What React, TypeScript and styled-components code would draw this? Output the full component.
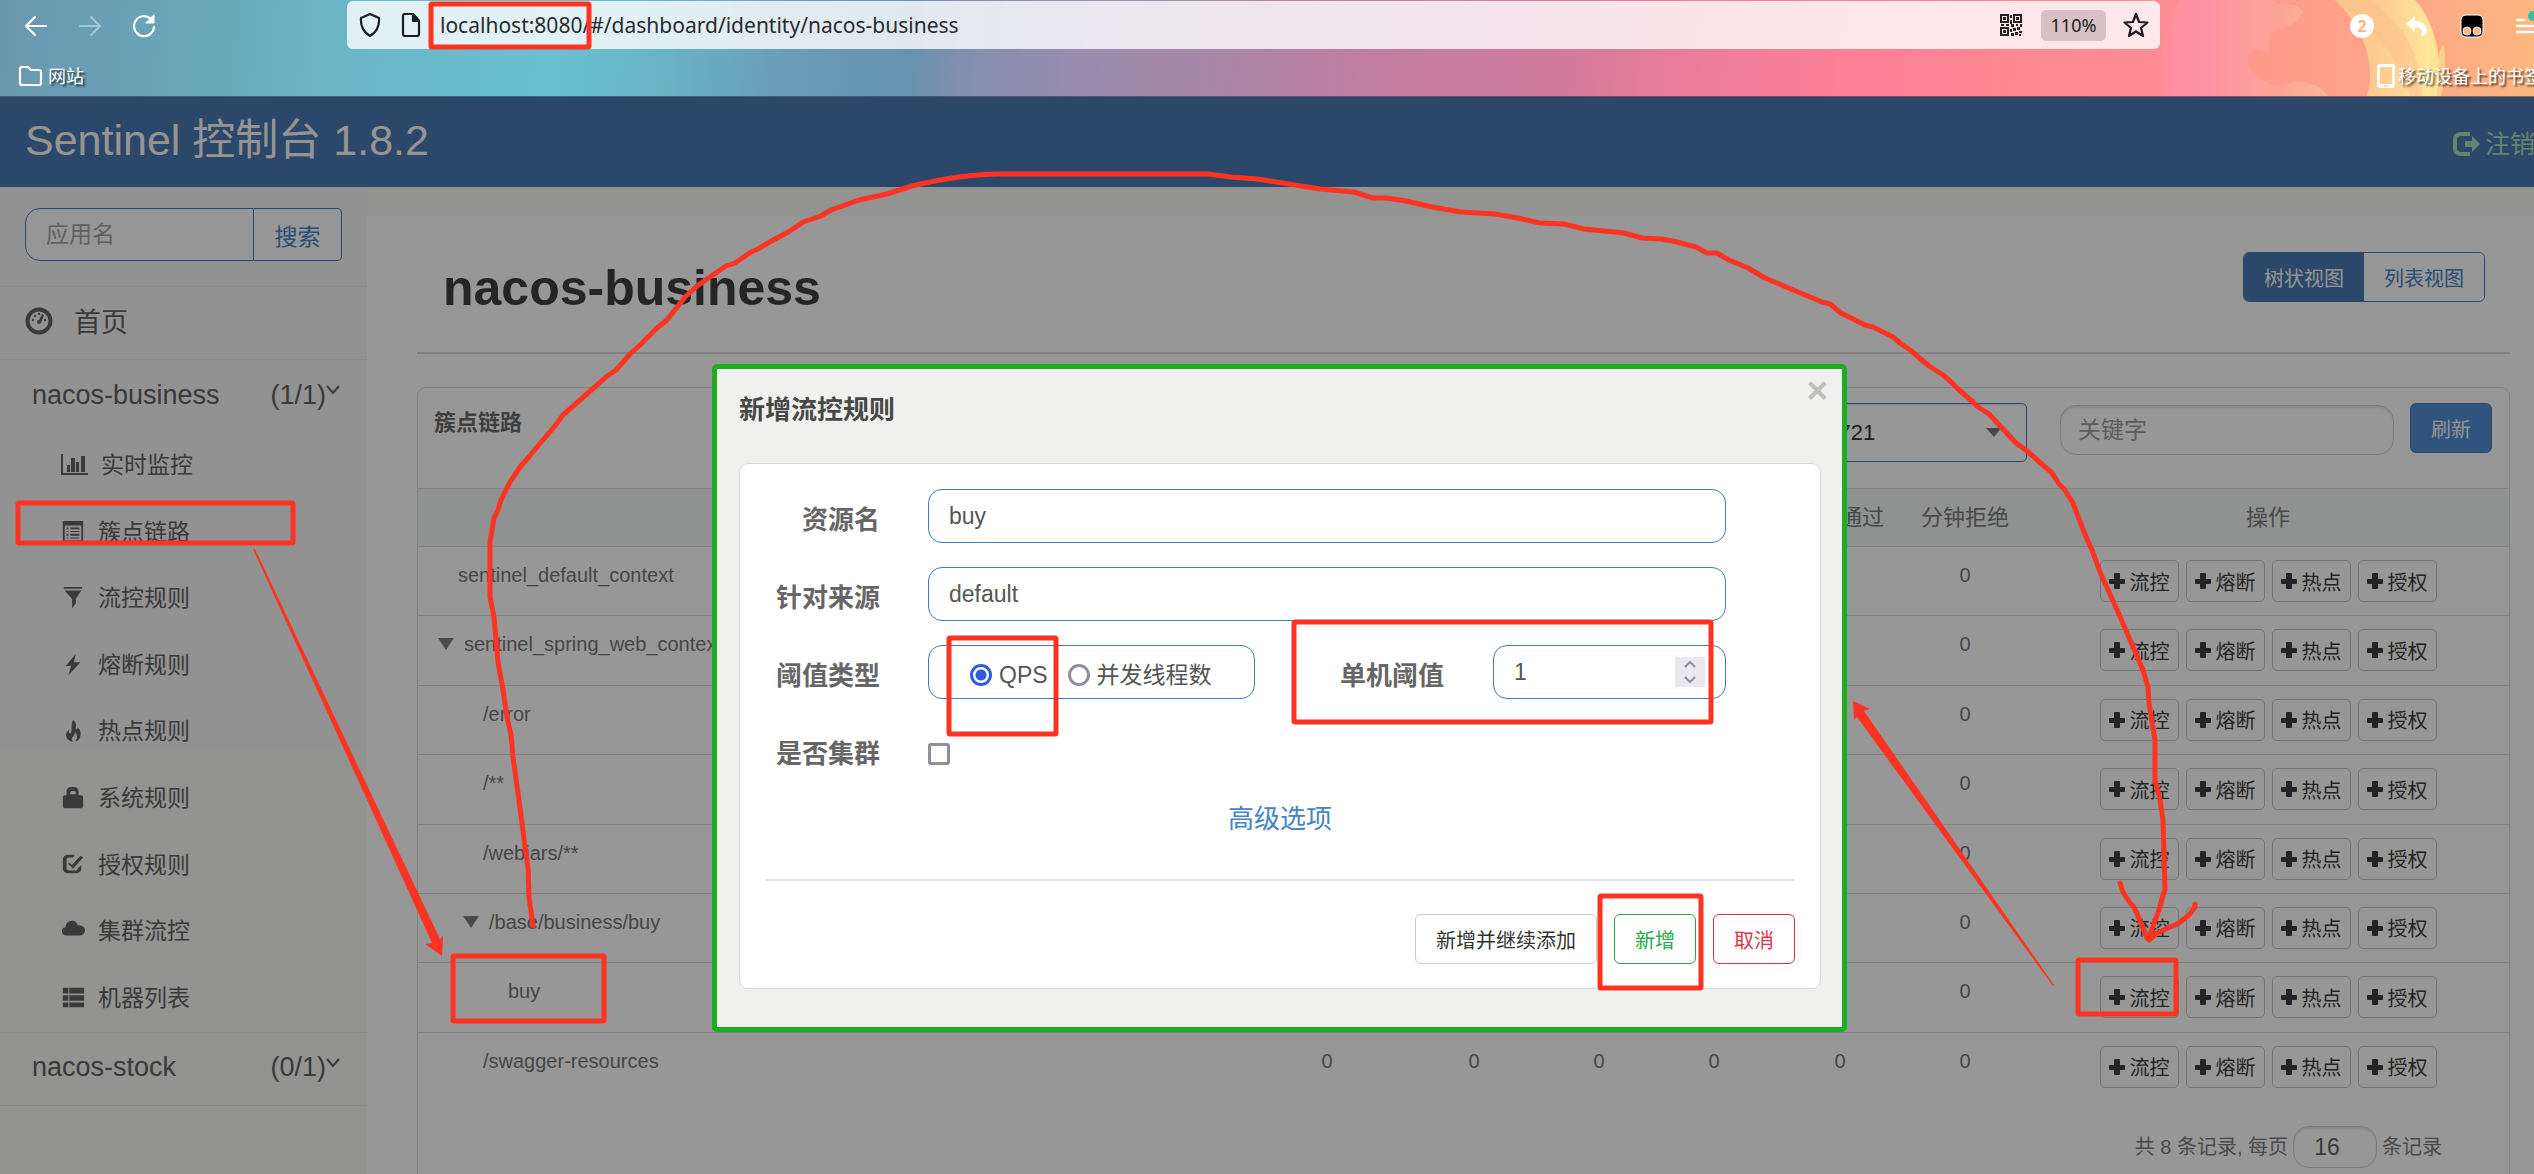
import React, { useState } from "react";
import styled, { createGlobalStyle, css } from "styled-components";

const UI_FONT = `"Liberation Sans", "Noto Sans CJK SC", Arial, sans-serif`;
const CHROME_FONT = `"Noto Sans", "Open Sans", "Noto Sans CJK SC", sans-serif`;
const BLUE = "#4878b2";
const LINE = "#d9d9d9";
const INK = "#616161";
const RED = "#ff3322";

const GlobalStyle = createGlobalStyle`
  *, *::before, *::after { box-sizing: border-box; }
  body { margin: 0; font-family: ${UI_FONT}; font-size: 20px; line-height: 30px; color: ${INK}; }
  button, input, select { font-family: inherit; margin: 0; }
  button { cursor: pointer; }
  svg { display: block; flex: none; }
`;

const Screen = styled.div`
  position: relative;
  height: 100vh;
  overflow: hidden;
  display: flex;
  flex-direction: column;
`;

/* ---------- browser chrome ---------- */

const Chrome = styled.header`
  position: relative;
  flex: none;
  display: flex;
  flex-direction: column;
  font-family: ${CHROME_FONT};
  color: #fff;
  border-bottom: 1px solid rgba(30, 20, 50, 0.5);
  background: linear-gradient(
    94deg,
    #6a97af 0%, #6aa5b9 7%, #6bb6c8 14%, #69c1d2 22%, #69b4c6 26%, #6a9eb8 31%,
    #6692b0 36%, #828fae 38%, #968db0 42%, #ad85a6 49%, #c47ca1 55%, #cf7b9c 61%,
    #ec7d99 67%, #ff8099 73%, #fd888f 80%, #ff8b92 85%, #fda389 92%, #fcb87f 100%
  );
`;

const ThemeArt = styled.svg`
  position: absolute;
  top: 0;
  right: 0;
  width: 404px;
  height: 96px;
`;

const Toolbar = styled.div`
  position: relative;
  display: flex;
  align-items: flex-start;
  padding-top: 1px;
`;

const NavButtons = styled.div`
  width: 347px;
  height: 50px;
  padding-left: 24px;
  display: flex;
  align-items: center;
  gap: 30px;
`;

const IconButton = styled.button<{ $dim?: boolean }>`
  border: 0;
  padding: 0;
  background: none;
  color: inherit;
  opacity: ${(p) => (p.$dim ? 0.4 : 1)};
`;

const AddressBar = styled.div`
  flex: 1;
  min-width: 0;
  height: 48px;
  padding: 0 11px 0 12px;
  display: flex;
  align-items: center;
  border-radius: 6px;
  background: rgba(255, 255, 255, 0.8);
  color: #1c1b22;
`;

const AddressInput = styled.input`
  flex: 1;
  min-width: 0;
  margin-left: 18px;
  padding: 0;
  border: 0;
  outline: 0;
  background: none;
  font-size: 21px;
  line-height: 32px;
  color: #2a2a31;
`;

const AddressIcons = styled.div`
  display: flex;
  gap: 19px;
`;

const ZoomLevel = styled.button`
  height: 31px;
  width: 65px;
  margin: 0 17px 0 19px;
  padding: 0;
  border: 0;
  border-radius: 5px;
  background: rgba(160, 140, 145, 0.42);
  font-size: 18px;
  color: #1c1b22;
`;

const Extensions = styled.div`
  width: 374px;
  height: 50px;
  padding-left: 190px;
  display: flex;
  align-items: center;
  gap: 32px;
`;

const ExtensionButton = styled(IconButton)`
  flex: none;
`;

const CountBadge = styled.span`
  flex: none;
  width: 24px;
  height: 24px;
  border-radius: 50%;
  background: #fff;
  color: #fcb583;
  font: 700 16px/24px ${CHROME_FONT};
  text-align: center;
`;

const Bookmarks = styled.nav`
  position: relative;
  height: 45px;
  margin-right: -8px;
  padding: 5px 0 0 18px;
  display: flex;
  align-items: flex-start;
  justify-content: space-between;
  font-size: 18px;
`;

const Bookmark = styled.a<{ $gap: number }>`
  height: 40px;
  display: flex;
  align-items: center;
  gap: ${(p) => p.$gap}px;
  color: #fff;
  text-decoration: none;
  text-shadow: 2px 2px 2px rgba(0, 0, 0, 0.7);
  white-space: nowrap;
`;

/* ---------- console page ---------- */

const Page = styled.div`
  position: relative;
  flex: 1;
  min-height: 0;
  width: calc(100% + 25px);
  display: flex;
  flex-direction: column;
  background: #fcfcfc;
`;

const TopBar = styled.div`
  flex: none;
  height: 90px;
  padding: 0 24px 0 25px;
  display: flex;
  justify-content: space-between;
  background: ${BLUE};
`;

const Brand = styled.a`
  font-size: 43px;
  line-height: 86px;
  color: #f9f7f3;
  text-decoration: none;
`;

const Logout = styled.a`
  display: flex;
  align-items: center;
  gap: 5px;
  padding-top: 4px;
  font-size: 25px;
  color: #a7dcb2;
  text-decoration: none;
`;

const Body = styled.div`
  flex: 1;
  min-height: 0;
  display: flex;
`;

const Sidebar = styled.aside`
  width: 367px;
  flex: none;
  background: linear-gradient(#f3f3f3 562px, #f6f6f2 562px);
`;

const SearchBox = styled.form`
  display: flex;
  height: 100px;
  padding: 21px 25px 25px;
  border-bottom: 1px solid #e6e6e6;
`;

const SearchInput = styled.input`
  width: 229px;
  height: 53px;
  padding: 0 20px;
  border: 1px solid ${BLUE};
  border-radius: 15px 0 0 15px;
  background: #fafafa;
  font-size: 23px;
  &::placeholder { color: #a2a2a2; }
`;

const SearchButton = styled.button`
  flex: 1;
  height: 53px;
  padding: 0;
  border: 1px solid ${BLUE};
  border-left: 0;
  border-radius: 0 5px 5px 0;
  background: #fafafa;
  font-size: 23px;
  color: #4680c0;
`;

const HomeLink = styled.a`
  height: 73px;
  padding-left: 25px;
  display: flex;
  align-items: center;
  gap: 21px;
  border-bottom: 1px solid #e6e6e6;
  font-size: 27px;
  color: ${INK};
  text-decoration: none;
`;

const AppGroup = styled.button<{ $closed?: boolean }>`
  width: 100%;
  height: 73px;
  padding: 0 27px 3px 32px;
  display: flex;
  align-items: center;
  border: 0;
  border-bottom: ${(p) => (p.$closed ? "1px solid #e6e6e6" : "0")};
  background: none;
  font-size: 27px;
  color: ${INK};
`;

const AppName = styled.span`
  flex: 1;
  text-align: left;
`;

const MenuList = styled.ul`
  height: 600px;
  margin: 0;
  padding: 0;
  list-style: none;
  display: grid;
  grid-auto-rows: 1fr;
  border-bottom: 1px solid #e6e6e6;
`;

const MenuLink = styled.a`
  height: 100%;
  padding: 0 0 2px 61px;
  display: flex;
  align-items: center;
  gap: 13px;
  font-size: 23px;
  color: ${INK};
  text-decoration: none;
`;

const Main = styled.main`
  flex: 1;
  min-width: 0;
  padding: 0 49px 0 50px;
  border-top: 29px solid #f6f6f2;
`;

const TitleRow = styled.div`
  height: 138px;
  padding: 36px 25px 0 26px;
  display: flex;
  justify-content: space-between;
  align-items: flex-start;
  border-bottom: 2px solid #d9d9d9;
`;

const Title = styled.h1`
  margin: 6px 0 0;
  font-size: 50px;
  line-height: 60px;
  color: #3e3e3e;
`;

const ViewSwitch = styled.div`
  display: flex;
  border: 1px solid ${BLUE};
  border-radius: 6px;
  overflow: hidden;
`;

const ViewButton = styled.button<{ $active?: boolean }>`
  width: 120px;
  height: 48px;
  padding: 0;
  border: 0;
  background: ${(p) => (p.$active ? BLUE : "#fcfcfc")};
  color: ${(p) => (p.$active ? "#f6f6f6" : "#4680c0")};
  font-size: 20px;
`;

const Card = styled.section`
  height: 860px;
  margin-top: 33px;
  border: 1px solid ${LINE};
  border-radius: 9px;
`;

const CardHeader = styled.div`
  height: 100px;
  padding: 15px 17px 0 16px;
  display: flex;
  align-items: flex-start;
`;

const CardTitle = styled.h2`
  flex: 1;
  margin: 5px 0 0;
  font-size: 22px;
  line-height: 30px;
  color: #6a6a6a;
`;

const SelectWrap = styled.div`
  position: relative;
  width: 340px;
  margin-right: 33px;
  & > svg { position: absolute; right: 26px; top: 25px; }
`;

const MachineSelect = styled.select`
  appearance: none;
  width: 100%;
  height: 59px;
  padding: 0 16px;
  border: 1px solid ${BLUE};
  border-radius: 5px;
  background: #fcfcfc;
  box-shadow: inset 0 2px 2px rgba(0, 0, 0, 0.08);
  font-size: 22px;
  color: #333;
`;

const fieldFrame = css`
  border: 1px solid #cfcfcf;
  border-radius: 16px;
  background: #fcfcfc;
  box-shadow: inset 0 2px 2px rgba(0, 0, 0, 0.09);
  font-size: 23px;
`;

const KeywordInput = styled.input`
  ${fieldFrame}
  width: 334px;
  height: 50px;
  margin: 2px 16px 0 0;
  padding: 0 17px;
  &::placeholder { color: #9a9a9a; }
`;

const RefreshButton = styled.button`
  width: 82px;
  height: 50px;
  padding: 0;
  border: 1px solid #4878b2;
  border-radius: 6px;
  background: #508cd0;
  font-size: 20px;
  color: #f6f6f6;
`;

const ResourceTable = styled.table`
  width: 100%;
  height: 613px;
  border-collapse: separate;
  border-spacing: 0;
  table-layout: fixed;
`;

const HeadCell = styled.th`
  height: 58px;
  padding: 0;
  border-top: 1px solid ${LINE};
  background: #eff3f1;
  font-size: 22px;
  font-weight: 400;
  color: #7a7a7a;
`;

const Cell = styled.td<{ $center?: boolean }>`
  padding: 13px 0 0;
  border-top: 1px solid ${LINE};
  vertical-align: top;
  text-align: ${(p) => (p.$center ? "center" : "left")};
  font-size: 20px;
  line-height: 30px;
  color: #767676;
`;

const ResourceName = styled.div<{ $depth: number; $leaf: boolean }>`
  padding-left: ${(p) => 20 + 25 * p.$depth + (p.$leaf ? 20 : 0)}px;
  display: flex;
  align-items: center;
  gap: 10px;
`;

const Actions = styled.div`
  display: flex;
  justify-content: center;
  gap: 7px;
  padding-bottom: 13px;
`;

const ActionButton = styled.button`
  height: 42px;
  padding: 0 8px;
  display: flex;
  align-items: center;
  gap: 5px;
  border: 1px solid #c4c4c4;
  border-radius: 5px;
  background: none;
  font-size: 20px;
  color: #3c3c3c;
  white-space: nowrap;
`;

const Pager = styled.div`
  margin-top: 25px;
  padding-right: 67px;
  display: flex;
  align-items: center;
  justify-content: flex-end;
  gap: 5px;
  color: #7c7c7c;
`;

const PageSize = styled.input`
  ${fieldFrame}
  width: 84px;
  height: 42px;
  padding: 0 16px 0 0;
  text-align: center;
  color: #616161;
`;

/* ---------- modal ---------- */

const Backdrop = styled.div`
  position: absolute;
  inset: 0;
  padding-top: 267px;
  display: flex;
  justify-content: center;
  align-items: flex-start;
  background: rgba(0, 0, 0, 0.4);
`;

const Modal = styled.div`
  width: 1135px;
  padding-bottom: 38px;
  border: 5px solid #1cad22;
  border-radius: 5px;
  background: #f0f0ee;
`;

const ModalHeader = styled.div`
  height: 94px;
  padding: 6px 14px 0 22px;
  display: flex;
  justify-content: space-between;
  align-items: flex-start;
`;

const ModalTitle = styled.h3`
  margin: 19px 0 0;
  font-size: 26px;
  line-height: 32px;
  color: #484848;
`;

const CloseButton = styled.button`
  padding: 0;
  border: 0;
  background: none;
  font-size: 37px;
  font-weight: 700;
  line-height: 32px;
  color: #c0c0bf;
`;

const Panel = styled.form`
  margin: 0 21px 0 22px;
  padding: 25px 25px 24px;
  border: 1px solid #dadada;
  border-radius: 9px;
  background: #fff;
`;

const Fields = styled.div`
  padding-right: 69px;
  display: grid;
  grid-template-columns: 115px 1fr;
  column-gap: 48px;
  row-gap: 24px;
`;

const FieldLabel = styled.label`
  padding-top: 8px;
  font-size: 26px;
  line-height: 46px;
  font-weight: 700;
  color: #666;
  text-align: right;
  white-space: nowrap;
`;

const blueFrame = css`
  height: 54px;
  border: 1px solid #3f7ab8;
  border-radius: 14px;
  background: #fff;
  font-size: 23px;
  color: #555;
`;

const TextInput = styled.input`
  ${blueFrame}
  width: 100%;
  padding: 0 20px;
`;

const Split = styled.div`
  display: flex;
`;

const RadioGroup = styled.div`
  ${blueFrame}
  width: 327px;
  padding: 5px 0 0 41px;
  display: flex;
  align-items: center;
  gap: 20px;
`;

const RadioLabel = styled.label`
  display: flex;
  align-items: center;
  gap: 7px;
`;

const Radio = styled.input`
  appearance: none;
  width: 22px;
  height: 22px;
  border: 3px solid #8f8f9d;
  border-radius: 50%;
  background: #fff;
  &:checked {
    border-color: #2b5cde;
    background: radial-gradient(circle, #2b5cde 5px, #fff 6px);
  }
`;

const ThresholdLabel = styled(FieldLabel)`
  flex: 1;
  padding-right: 49px;
`;

const NumberBox = styled.div`
  ${blueFrame}
  width: 233px;
  padding: 0 20px;
  display: flex;
  align-items: center;
`;

const NumberInput = styled.input`
  flex: 1;
  min-width: 0;
  padding: 0;
  border: 0;
  outline: 0;
  appearance: textfield;
  font-size: 23px;
  color: #555;
  &::-webkit-inner-spin-button { appearance: none; margin: 0; }
`;

const Spinner = styled.div`
  width: 30px;
  height: 30px;
  display: flex;
  flex-direction: column;
  align-items: center;
  background: #e8e8ed;
`;

const SpinButton = styled.button`
  width: 30px;
  height: 15px;
  padding: 0;
  border: 0;
  background: none;
  display: flex;
  align-items: center;
  justify-content: center;
`;

const CheckRow = styled.div`
  height: 54px;
  padding-top: 8px;
  display: flex;
  align-items: center;
`;

const Checkbox = styled.input`
  appearance: none;
  width: 22px;
  height: 22px;
  border: 3px solid #8f8f9d;
  border-radius: 3px;
  background: #fff;
`;

const AdvancedLink = styled.a`
  width: fit-content;
  margin: 24px auto 42px;
  display: block;
  font-size: 26px;
  line-height: 36px;
  color: #4483c8;
  text-decoration: none;
`;

const ModalFooter = styled.div`
  padding-top: 33px;
  border-top: 2px solid #e3e3e3;
  display: flex;
  justify-content: flex-end;
  gap: 17px;
`;

const OutlineButton = styled.button<{ $line: string; $ink: string }>`
  height: 50px;
  padding: 0 20px;
  border: 1px solid ${(p) => p.$line};
  border-radius: 6px;
  background: #fff;
  font-size: 20px;
  color: ${(p) => p.$ink};
`;

/* ---------- annotations ---------- */

const Markup = styled.svg`
  position: absolute;
  left: 0;
  top: 0;
  pointer-events: none;
`;

/* ---------- icons ---------- */

type IconName =
  | "stats" | "list" | "filter" | "flash" | "fire" | "lock" | "check" | "cloud" | "rows";

const Glyph = ({ name }: { name: IconName }) => {
  if (name === "stats") {
    return (
      <svg width="27" height="22" viewBox="0 0 27 22" fill="currentColor" aria-hidden="true">
        <path d="M0 0h2v19h25v2H0z" />
        <path d="M6 11h3v7H6zM10 4h4v14h-4zM15 8h3v10h-3zM20 2h4v16h-4z" />
      </svg>
    );
  }
  const shapes: Record<Exclude<IconName, "stats">, React.ReactNode> = {
    list: (
      <>
        <path fillRule="evenodd" d="M2 0h22v23H2zM4 5v16h18V5z" />
        <path d="M6 7h2v2H6zM10 7h10v2H10zM6 11h2v1H6zM10 11h10v1H10zM6 14h2v2H6zM10 14h10v2H10zM6 18h2v1H6zM10 18h10v1H10z" />
      </>
    ),
    filter: <path d="M3 0h20v2H3zM4 4h18l-6 9v5l-4 5V13z" />,
    flash: <path d="M16 0 5 13h6L8 23l13-14h-7z" />,
    fire: (
      <path d="M13 0c5 4 3 7 3 9 0 2 2 2 2-1 4 3 4 9 2 12-1 2-3 3-5 3 3-3 3-6 0-10 0 5-4 5-3 9l1 2c-5-1-9-5-7-10 1-2 2-3 3-4-1 3 0 5 1 5 3-4 0-8 3-15z" />
    ),
    lock: (
      <path fillRule="evenodd" d="M6 9V5c0-3 2-5 5-5h3c3 0 5 2 5 5v4h3c1 0 2 1 2 2v10c0 1-1 2-2 2H4c-1 0-2-1-2-2V11c0-1 1-2 2-2zM10 8h6V6c0-2-6-2-6 0z" />
    ),
    check: (
      <>
        <path d="M15 1H9C4 1 2 3 2 7v8c0 4 2 6 7 6h6c5 0 7-2 7-6v-3l-4 4c0 1-1 2-3 2H9c-2 0-3-1-3-3V7c0-2 1-3 3-3h4z" />
        <path d="m8 9 4 3 9-10 3 2-11 12-5-5z" />
      </>
    ),
    cloud: (
      <path d="M20 17H6c-3 0-5-2-5-5s2-4 4-4c0-4 3-7 7-7 3 0 6 2 6 5 4-1 8 2 8 5 0 4-3 6-6 6z" />
    ),
    rows: (
      <path d="M2 1h6v6H2zM9 1h16v6H9zM2 9h6v6H2zM9 9h16v6H9zM2 17h6v5H2zM9 17h16v5H9z" />
    ),
  };
  return (
    <svg width="24" height="24" viewBox="0 0 26 24" fill="currentColor" aria-hidden="true">
      {shapes[name]}
    </svg>
  );
};

const Plus = () => (
  <svg width="16" height="16" viewBox="0 0 16 16" fill="currentColor" aria-hidden="true">
    <path d="M6 0h4q1 0 1 1v5h4q1 0 1 1v3q0 1-1 1h-4v4q0 1-1 1H6q-1 0-1-1v-4H1q-1 0-1-1V7q0-1 1-1h4V1q0-1 1-1z" />
  </svg>
);

const Triangle = () => (
  <svg width="16" height="12" viewBox="0 0 16 12" fill="#7c7c7c" aria-hidden="true">
    <path d="M0 0h16L8 12z" />
  </svg>
);

const GroupChevron = () => (
  <svg width="14" height="26" viewBox="0 0 14 26" fill="none" stroke="currentColor" strokeWidth="2" aria-hidden="true">
    <path d="m1 4 6 7 6-7" />
  </svg>
);

const Dashboard = () => (
  <svg width="28" height="32" viewBox="0 0 28 32" aria-hidden="true">
    <circle cx="14" cy="14" r="11.500" fill="none" stroke="currentColor" strokeWidth="4" />
    <g fill="currentColor">
      <circle cx="8" cy="13" r="1.200" />
      <circle cx="10" cy="9" r="1.200" />
      <circle cx="14" cy="7" r="1.200" />
      <circle cx="20" cy="13" r="1.200" />
      <circle cx="14" cy="15" r="2" />
      <path d="m17 7 2 1-3 8-3-1z" />
    </g>
  </svg>
);

const chromeStroke = { fill: "none", stroke: "currentColor", strokeWidth: 2.2, strokeLinecap: "round", strokeLinejoin: "round" } as const;

const QrCode = () => (
  <svg width="22" height="22" viewBox="0 0 22 22" fill="#222" aria-hidden="true">
    <path fillRule="evenodd" d="M0 0h9v9H0zM2 2v5h5V2zM13 0h9v9h-9zM15 2v5h5V2zM0 13h9v9H0zM2 15v5h5v-5z" />
    <path d="M3 3h3v3H3zM16 3h3v3h-3zM3 16h3v3H3zM10 1h2v3h-2zM10 6h2v4h-2zM1 10h3v2H1zM6 10h3v2H6zM11 10h3v3h-3zM16 10h2v2h-2zM20 10h2v3h-2zM13 14h3v3h-3zM17 13h3v3h-3zM10 15h2v3h-2zM11 19h3v3h-3zM15 18h3v3h-3zM19 17h3v2h-3zM19 20h2v2h-2z" />
  </svg>
);

/* ---------- data ---------- */

const MENU: { icon: IconName; label: string }[] = [
  { icon: "stats", label: "实时监控" },
  { icon: "list", label: "簇点链路" },
  { icon: "filter", label: "流控规则" },
  { icon: "flash", label: "熔断规则" },
  { icon: "fire", label: "热点规则" },
  { icon: "lock", label: "系统规则" },
  { icon: "check", label: "授权规则" },
  { icon: "cloud", label: "集群流控" },
  { icon: "rows", label: "机器列表" },
];

const COLUMNS = ["", "通过QPS", "拒绝QPS", "并发数", "平均RT", "分钟通过", "分钟拒绝", "操作"];
const COLUMN_WIDTHS = [undefined, 148, 146, 104, 126, 126, 124, 482];
const ACTIONS = ["流控", "熔断", "热点", "授权"];

const RESOURCES = [
  { name: "sentinel_default_context", depth: 0, leaf: true },
  { name: "sentinel_spring_web_context", depth: 0, leaf: false },
  { name: "/error", depth: 1, leaf: true },
  { name: "/**", depth: 1, leaf: true },
  { name: "/webjars/**", depth: 1, leaf: true },
  { name: "/base/business/buy", depth: 1, leaf: false },
  { name: "buy", depth: 2, leaf: true },
  { name: "/swagger-resources", depth: 1, leaf: true },
];

/* x, y, width, height along the centre of each stroke */
const MARKED_BOXES = [
  [431, 4, 158, 43],
  [18, 503, 275, 40],
  [453, 956, 151, 65],
  [949, 638, 107, 96],
  [1294, 622, 417, 100],
  [1600, 896, 101, 92],
  [2078, 960, 98, 54],
];

const SWEEP =
  "M533 926 529 897 528 867 525 847 522 823 518 793 513 757 511 735 507 717 503 690 498 662 494 617 490 597 490 542 494 518 498 510 501 500 507 488 510 482 520 467 528 458 537 447 554 427 563 415 588 393 606 377 616 370 631 353 640 345 657 328 667 320 685 297 697 286 726 266 735 263 751 252 758 249 768 243 790 231 803 222 821 216 831 210 859 200 887 194 912 186 Q965 173 1007 174L1208 174 1231 177 1257 179 1320 189 1354 192 1373 198 1386 198 1406 201 1432 207 1461 212 1495 214 1518 218 1540 223 1564 224 1584 229 1624 233 1642 238 1661 239 1673 241 1696 247 1707 253 1717 253 1729 260 1748 268 1765 278 1803 294 1822 302 1830 304 1841 313 1865 325 1873 327 1893 337 1900 343 1910 350 1929 366 1943 375 1950 381 1957 388 1973 402 1978 407 1989 414 2001 427 2016 443 2027 451 2052 473 2059 484 2064 489 2073 503 2084 532 2092 550 2100 572 2118 612 2134 649 2143 670 2148 687 2149 703 2155 740 2155 780 2160 800 2163 820 2165 890 2163 895 2159 910 2149 937";
const SWEEP_HEAD =
  "M2120 883 2123 892 2130 903 2134 907 2141 923 2147 938 2149 940 2157 933 2179 923 2189 915 2195 907 2195 904";

const BrowserChrome = () => (
  <Chrome>
    <ThemeArt viewBox="0 0 404 96" aria-hidden="true">
      <defs>
        <linearGradient id="fur" x1="0" x2="1">
          <stop offset="0" stopColor="#ff8d98" />
          <stop offset="0.25" stopColor="#fd93a8" />
          <stop offset="0.7" stopColor="#fda394" />
          <stop offset="1" stopColor="#fdb69a" />
        </linearGradient>
        <linearGradient id="tail" x1="0" x2="1">
          <stop offset="0" stopColor="#fdc792" />
          <stop offset="0.45" stopColor="#fdcc90" />
          <stop offset="0.9" stopColor="#fde79b" />
          <stop offset="1" stopColor="#fde08f" />
        </linearGradient>
        <linearGradient id="sky" x1="0" x2="1">
          <stop offset="0" stopColor="#fd9a8b" />
          <stop offset="0.5" stopColor="#fda48a" />
          <stop offset="1" stopColor="#fcb87f" />
        </linearGradient>
      </defs>
      <path d="M120 0H404V96H120z" fill="url(#sky)" />
      <path d="M50 0C34 26 28 62 32 96H198C190 85 176 80 163 82C150 90 135 84 125 74C117 66 115 56 121 51C127 48 134 50 138 54C140 46 140 40 139 34C150 28 168 25 172 13C173 5 160 4 148 3L140 0z" fill="url(#fur)" />
      <path d="M205 0C232 26 247 62 237 96H308C314 62 305 22 285 0z" fill="url(#tail)" />
      <path d="M205 0C232 22 262 40 280 96H292C292 50 268 20 240 0z" fill="#fdbd8c" opacity="0.5" />
      <path d="M309 56Q311 44 314 45Q317 72 311 96H307z" fill="#fdd08c" />
    </ThemeArt>
    <Toolbar>
      <NavButtons>
        <IconButton aria-label="后退">
          <svg width="24" height="24" viewBox="0 0 24 24" {...chromeStroke}><path d="M22 12H2M11 3 2 12l9 9" /></svg>
        </IconButton>
        <IconButton aria-label="前进" $dim>
          <svg width="24" height="24" viewBox="0 0 24 24" {...chromeStroke}><path d="M2 12h20M13 3l9 9-9 9" /></svg>
        </IconButton>
        <IconButton aria-label="刷新页面">
          <svg width="24" height="24" viewBox="0 0 24 24" {...chromeStroke}>
            <path d="M19 5A10 10 0 1 0 22 13" />
            <path d="M22 1v8h-8z" fill="currentColor" strokeWidth="1" />
          </svg>
        </IconButton>
      </NavButtons>
      <AddressBar>
        <AddressIcons>
          <svg width="22" height="24" viewBox="0 0 22 24" {...chromeStroke}><path d="M11 1 20 5q1 12-9 18Q1 17 2 5z" /></svg>
          <svg width="22" height="24" viewBox="0 0 22 24" {...chromeStroke}>
            <path d="M13 1H5Q3 1 3 3v18q0 2 2 2h12q2 0 2-2V8z" />
            <path d="M13 1v7h6z" fill="currentColor" />
          </svg>
        </AddressIcons>
        <AddressInput aria-label="地址栏" defaultValue="localhost:8080/#/dashboard/identity/nacos-business" />
        <QrCode />
        <ZoomLevel>110%</ZoomLevel>
        <svg width="26" height="24" viewBox="0 0 26 24" {...chromeStroke}>
          <path d="m13 1 3 8 8.500.5-6.500 5.500 2 8-7-4.500L6 23l2-8L1.500 9.500 10 9z" />
        </svg>
      </AddressBar>
      <Extensions>
        <CountBadge>2</CountBadge>
        <ExtensionButton aria-label="撤销">
          <svg width="22" height="20" viewBox="0 0 22 20" fill="#fff" aria-hidden="true">
            <path d="M9 0v5c9 0 14 7 11 13-1 2-5 3-5 1 3-4 0-8-6-8v5L0 8z" />
          </svg>
        </ExtensionButton>
        <ExtensionButton aria-label="扩展">
          <svg width="24" height="24" viewBox="0 0 24 24" aria-hidden="true">
            <rect x="1" y="1" width="22" height="22" rx="5" fill="#000" stroke="#fff" strokeWidth="1" />
            <circle cx="7" cy="17" r="4" fill="#fcb583" stroke="#fff" />
            <circle cx="17" cy="17" r="4" fill="#fcb583" stroke="#fff" />
          </svg>
        </ExtensionButton>
        <ExtensionButton aria-label="菜单">
          <svg width="28" height="30" viewBox="0 0 28 30" aria-hidden="true">
            <path d="M1 9h7M1 15h16M1 21h16" stroke="#fff" strokeWidth="2.500" strokeLinecap="round" />
            <circle cx="17" cy="5" r="5" fill="#2ac3a2" />
          </svg>
        </ExtensionButton>
      </Extensions>
    </Toolbar>
    <Bookmarks>
      <Bookmark href="#sites" $gap={5}>
        <svg width="25" height="22" viewBox="0 0 25 22" {...chromeStroke}>
          <path d="M2 4q0-2 2-2h6l3 3h8q2 0 2 2v11q0 2-2 2H4q-2 0-2-2z" />
        </svg>
        网站
      </Bookmark>
      <Bookmark href="#mobile" $gap={3}>
        <svg width="18" height="24" viewBox="0 0 18 24" aria-hidden="true">
          <path fill="#fff" fillRule="evenodd" d="M3 0h12q3 0 3 3v18q0 3-3 3H3q-3 0-3-3V3q0-3 3-3zM3 3v17h12V3z" />
          <path d="M7 22h4" stroke="#fcb583" />
        </svg>
        移动设备上的书签
      </Bookmark>
    </Bookmarks>
  </Chrome>
);

const RuleModal = () => {
  const [limit, setLimit] = useState(1);
  return (
    <Backdrop>
      <Modal role="dialog" aria-labelledby="rule-title">
        <ModalHeader>
          <ModalTitle id="rule-title">新增流控规则</ModalTitle>
          <CloseButton aria-label="关闭">×</CloseButton>
        </ModalHeader>
        <Panel onSubmit={(e) => e.preventDefault()}>
          <Fields>
            <FieldLabel htmlFor="resource">资源名</FieldLabel>
            <TextInput id="resource" defaultValue="buy" />
            <FieldLabel htmlFor="origin">针对来源</FieldLabel>
            <TextInput id="origin" defaultValue="default" />
            <FieldLabel as="span" id="grade">阈值类型</FieldLabel>
            <Split>
              <RadioGroup role="radiogroup" aria-labelledby="grade">
                <RadioLabel><Radio type="radio" name="grade" defaultChecked />QPS</RadioLabel>
                <RadioLabel><Radio type="radio" name="grade" />并发线程数</RadioLabel>
              </RadioGroup>
              <ThresholdLabel htmlFor="limit">单机阈值</ThresholdLabel>
              <NumberBox>
                <NumberInput id="limit" type="number" value={limit} onChange={(e) => setLimit(Number(e.target.value))} />
                <Spinner>
                  <SpinButton type="button" aria-label="增加" onClick={() => setLimit(limit + 1)}>
                    <svg width="12" height="7" viewBox="0 0 12 7" fill="none" stroke="#8f8f9d" strokeWidth="2"><path d="m1 6 5-5 5 5" /></svg>
                  </SpinButton>
                  <SpinButton type="button" aria-label="减少" onClick={() => setLimit(limit - 1)}>
                    <svg width="12" height="7" viewBox="0 0 12 7" fill="none" stroke="#8f8f9d" strokeWidth="2"><path d="m1 1 5 5 5-5" /></svg>
                  </SpinButton>
                </Spinner>
              </NumberBox>
            </Split>
            <FieldLabel htmlFor="cluster">是否集群</FieldLabel>
            <CheckRow><Checkbox id="cluster" type="checkbox" /></CheckRow>
          </Fields>
          <AdvancedLink href="#advanced">高级选项</AdvancedLink>
          <ModalFooter>
            <OutlineButton type="button" $line="#ccc" $ink="#333">新增并继续添加</OutlineButton>
            <OutlineButton type="submit" $line="#28a745" $ink="#28a745">新增</OutlineButton>
            <OutlineButton type="button" $line="#dc3545" $ink="#dc3545">取消</OutlineButton>
          </ModalFooter>
        </Panel>
      </Modal>
    </Backdrop>
  );
};

export default function App() {
  return (
    <Screen>
      <GlobalStyle />
      <BrowserChrome />
      <Page>
        <TopBar>
          <Brand href="#home">Sentinel 控制台 1.8.2</Brand>
          <Logout href="#logout">
            <svg width="27" height="24" viewBox="0 0 27 24" fill="currentColor" aria-hidden="true">
              <path d="M17 0H8C3 0 0 3 0 7v10c0 4 3 7 8 7h9v-4H8c-2 0-4-1-4-3V7c0-2 2-3 4-3h9z" />
              <path d="M12 9h7V4l8 8-8 8v-5h-7z" />
            </svg>
            注销
          </Logout>
        </TopBar>
        <Body>
          <Sidebar>
            <SearchBox onSubmit={(e) => e.preventDefault()}>
              <SearchInput placeholder="应用名" aria-label="应用名" />
              <SearchButton>搜索</SearchButton>
            </SearchBox>
            <HomeLink href="#home"><Dashboard />首页</HomeLink>
            <AppGroup><AppName>nacos-business</AppName>(1/1)<GroupChevron /></AppGroup>
            <MenuList>
              {MENU.map((m) => (
                <li key={m.label}>
                  <MenuLink href="#rule"><Glyph name={m.icon} />{m.label}</MenuLink>
                </li>
              ))}
            </MenuList>
            <AppGroup $closed><AppName>nacos-stock</AppName>(0/1)<GroupChevron /></AppGroup>
          </Sidebar>
          <Main>
            <TitleRow>
              <Title>nacos-business</Title>
              <ViewSwitch>
                <ViewButton $active>树状视图</ViewButton>
                <ViewButton>列表视图</ViewButton>
              </ViewSwitch>
            </TitleRow>
            <Card>
              <CardHeader>
                <CardTitle>簇点链路</CardTitle>
                <SelectWrap>
                  <MachineSelect aria-label="机器">
                    <option>172.20.10.2:8721</option>
                  </MachineSelect>
                  <svg width="15" height="9" viewBox="0 0 15 9" fill="#777"><path d="M0 0h15L8 9z" /></svg>
                </SelectWrap>
                <KeywordInput placeholder="关键字" aria-label="关键字" />
                <RefreshButton>刷新</RefreshButton>
              </CardHeader>
              <ResourceTable>
                <colgroup>
                  {COLUMN_WIDTHS.map((w, i) => <col key={i} width={w} />)}
                </colgroup>
                <thead>
                  <tr>{COLUMNS.map((c) => <HeadCell key={c}>{c}</HeadCell>)}</tr>
                </thead>
                <tbody>
                  {RESOURCES.map((r) => (
                    <tr key={r.name}>
                      <Cell>
                        <ResourceName $depth={r.depth} $leaf={r.leaf}>
                          {!r.leaf && <Triangle />}
                          {r.name}
                        </ResourceName>
                      </Cell>
                      {[0, 0, 0, 0, 0, 0].map((v, i) => <Cell key={i} $center>{v}</Cell>)}
                      <Cell>
                        <Actions>
                          {ACTIONS.map((a) => <ActionButton key={a}><Plus />{a}</ActionButton>)}
                        </Actions>
                      </Cell>
                    </tr>
                  ))}
                </tbody>
              </ResourceTable>
              <Pager>
                <label htmlFor="page-size">共 8 条记录, 每页</label>
                <PageSize id="page-size" defaultValue="16" />
                <span>条记录</span>
              </Pager>
            </Card>
          </Main>
        </Body>
        <RuleModal />
      </Page>
      <Markup width="2534" height="1174" viewBox="0 0 2534 1174" aria-hidden="true">
        <g fill="none" stroke={RED} strokeWidth="5" strokeLinejoin="round">
          {MARKED_BOXES.map(([x, y, w, h]) => <rect key={`${x}-${y}`} x={x} y={y} width={w} height={h} rx="1" />)}
          <path d={SWEEP} strokeLinecap="round" />
          <path d={SWEEP_HEAD} strokeLinecap="round" />
        </g>
        <g fill={RED}>
          <path d="M253 549h2L440 939 443 936 442 956 425 944 432 943z" />
          <path d="M2054 985 1864 711 1870 709 1853 701 1854 720 1857 717 2053 986z" />
        </g>
      </Markup>
    </Screen>
  );
}
